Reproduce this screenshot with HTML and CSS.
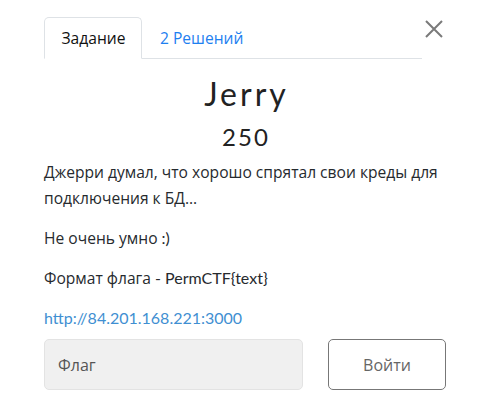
FILE: index.html
```html
<!DOCTYPE html>
<html>
<head>
<meta charset="utf-8">
<link rel="stylesheet" href="styles.css">
</head>
<body>
<div class="modal">
  <div class="head">
    <ul class="tabs">
      <li class="tab active">Задание</li>
      <li class="tab link">2 Решений</li>
    </ul>
    <button class="close" aria-label="close">
      <svg width="18" height="18" viewBox="0 0 18 18"><path d="M1 1L17 17M17 1L1 17" stroke="#7a7a7a" stroke-width="2" fill="none"/></svg>
    </button>
  </div>
  <h2 class="title">Jerry</h2>
  <h3 class="value">250</h3>
  <div class="desc">
    <p>Джерри думал, что хорошо спрятал свои креды для подключения к БД...</p>
    <p>Не очень умно <span class="lat">:)</span></p>
    <p>Формат флага <span class="lat">- PermCTF{text}</span></p>
    <p class="last"><a href="#" class="url lat">http://84.201.168.221:3000</a></p>
  </div>
  <form class="submit">
    <input class="flag" type="text" placeholder="Флаг">
    <button class="btn" type="button">Войти</button>
  </form>
</div>
</body>
</html>
```
FILE: styles.css
```css
html, body {
  margin: 0;
  padding: 0;
  background: #fff;
}
body {
  font-family: "Open Sans", sans-serif;
  color: #262a2e;
  font-size: 15.6px;
}
.lat {
  font-family: Lato, sans-serif;
  font-size: 16px;
}
.modal {
  padding: 17px 44px 0 44px;
}
.head {
  display: flex;
  align-items: flex-start;
}
.tabs {
  list-style: none;
  margin: 0;
  padding: 0;
  display: flex;
  width: 378px;
  border-bottom: 1px solid #dee2e6;
  font-size: 15.6px;
}
.tab {
  padding: 9px 16px 9px 16.5px;
  margin-bottom: -1px;
  border: 1px solid transparent;
  border-radius: 5px 5px 0 0;
  line-height: 22px;
}
.tab.active {
  border-color: #dee2e6 #dee2e6 #fff;
  color: #111;
}
.tab.link {
  color: #1e80f0;
}
.close {
  margin-left: auto;
  margin-top: 3px;
  margin-right: 3px;
  background: none;
  border: 0;
  padding: 0;
  width: 18px;
  height: 18px;
}
.title {
  margin: 15px 0 0 0;
  text-align: center;
  font-family: Lato, sans-serif;
  font-weight: 400;
  font-size: 32px;
  letter-spacing: 3px;
  text-indent: 3px;
  line-height: 40px;
  color: #222;
}
.value {
  margin: 8px 0 0 0;
  text-align: center;
  font-family: Lato, sans-serif;
  font-weight: 400;
  font-size: 24px;
  letter-spacing: 2px;
  text-indent: 2px;
  line-height: 30px;
  color: #222;
}
.desc {
  margin-top: 7px;
}
.desc p {
  margin: 0 0 14px 0;
  line-height: 26px;
}
.desc p.last {
  margin-bottom: 0;
}
.url {
  color: #3f8fd2;
  text-decoration: none;
}
.submit {
  display: flex;
  justify-content: space-between;
  margin-top: 8px;
}
.flag {
  width: 259px;
  height: 51px;
  box-sizing: border-box;
  background: #f0f0f0;
  border: 1px solid #e3e3e3;
  border-radius: 5px;
  padding: 0 13px;
  font-family: "Open Sans", sans-serif;
  font-size: 16px;
  color: #555;
}
.flag::placeholder {
  color: #555;
}
.btn {
  width: 118px;
  height: 51px;
  box-sizing: border-box;
  background: #fff;
  border: 1px solid #777;
  border-radius: 5px;
  font-family: "Open Sans", sans-serif;
  font-size: 16px;
  color: #666;
}
```
